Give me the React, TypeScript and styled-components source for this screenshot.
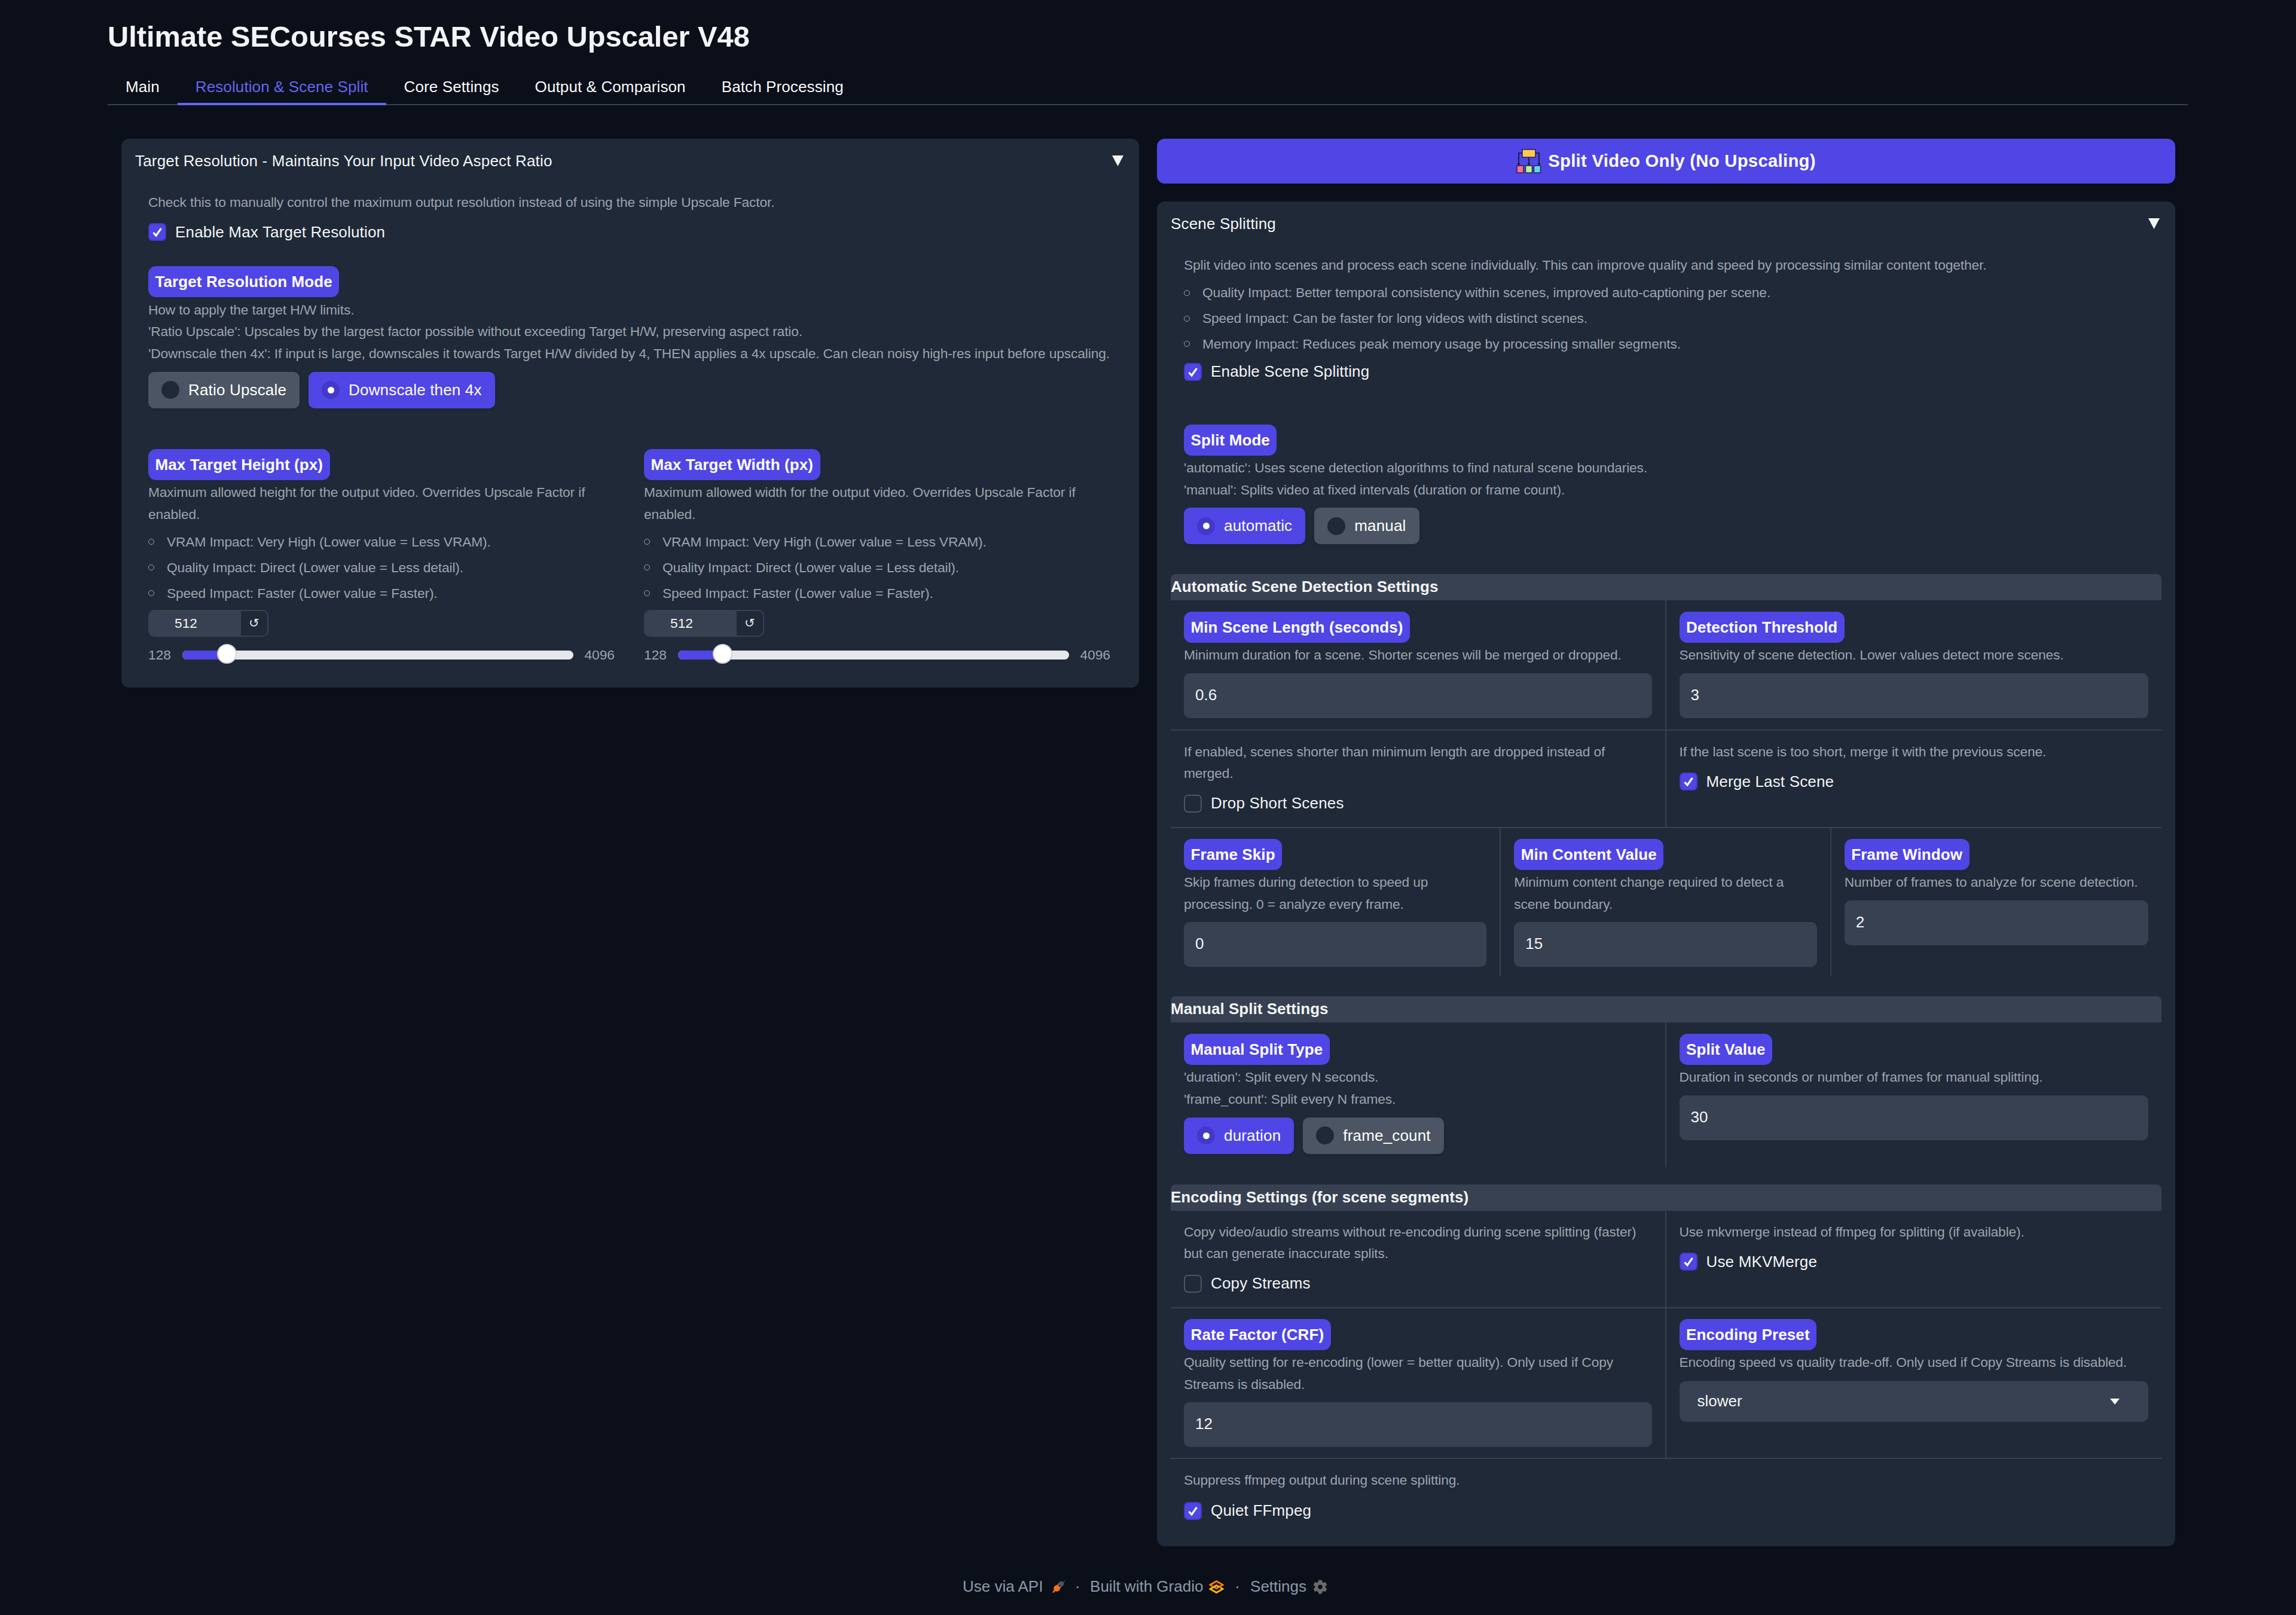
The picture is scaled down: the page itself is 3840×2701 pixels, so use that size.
import React from 'react';
import styled, { createGlobalStyle } from 'styled-components';
import { FaCog } from 'react-icons/fa';

const Global = createGlobalStyle`
  * { box-sizing: border-box; }
  html, body { margin: 0; padding: 0; background: #0b0f19; }
  body { font-family: "Liberation Sans", Arial, sans-serif; color: #f3f4f6; letter-spacing: 0.17px; }
`;

const Page = styled.div`
  min-height: 2701px;
  padding: 0 181px 0 180px;
  background: #0b0f19;
`;
const Title = styled.h1`
  margin: 0;
  height: 115px;
  padding-top: 27px;
  font-size: 48.75px;
  line-height: 68px;
  font-weight: 700;
  letter-spacing: 0;
  color: #f3f4f6;
`;
const TabBar = styled.nav`
  display: flex;
  height: 61px;
  box-shadow: inset 0 -2px 0 #374151;
`;
const Tab = styled.div<{ $active?: boolean }>`
  padding: 0 30px;
  height: 61px;
  line-height: 60px;
  font-size: 26px;
  letter-spacing: 0.11px;
  color: ${p => (p.$active ? '#6366f1' : '#f9fafb')};
  border-bottom: 4px solid ${p => (p.$active ? '#6366f1' : 'transparent')};
`;
const Columns = styled.main`
  display: grid;
  grid-template-columns: 1702px 1703px;
  column-gap: 30px;
  padding: 56px 0 0 23px;
  align-items: start;
`;
const Stack = styled.div`
  display: flex;
  flex-direction: column;
  gap: 30px;
`;
const Panel = styled.section`
  background: #1f2937;
  border-radius: 13px;
  padding: 0 23px;
`;
const LeftPanel = styled(Panel)`
  padding-bottom: 38px;
`;
const RightPanel = styled(Panel)`
  padding-bottom: 44px;
`;
const PanelHeader = styled.header`
  display: flex;
  align-items: center;
  justify-content: space-between;
  height: 74px;
  margin-bottom: -2px;
  font-size: 26px;
  color: #f3f4f6;
`;
const Caret = styled.svg`
  width: 19px;
  height: 18px;
  margin-right: 3px;
  fill: #f3f4f6;
`;
const Body = styled.div`
  padding: 16px 0 0 22px;
`;
const RightBody = styled.div`
  padding-top: 16px;
`;
const Intro = styled.div`
  padding-left: 22px;
`;
const Closing = styled(Intro)`
  padding-top: 17px;
`;
const Pill = styled.div<{ $mt?: number }>`
  display: inline-block;
  height: 52px;
  line-height: 52px;
  padding: 0 11.5px;
  margin-top: ${p => p.$mt ?? 0}px;
  background: #4f46e5;
  border-radius: 13px;
  color: #fff;
  font-size: 26px;
  font-weight: 700;
  letter-spacing: 0.1px;
  white-space: nowrap;
  vertical-align: top;
`;
const Desc = styled.div`
  margin-top: 2.5px;
  font-size: 22.75px;
  line-height: 36.4px;
  letter-spacing: -0.13px;
  color: #9ca3af;
`;
const PlainDesc = styled(Desc)`
  margin-top: 0;
`;
const Bullets = styled.ul`
  list-style: none;
  margin: 10px 0 0;
  padding: 0;
  display: flex;
  flex-direction: column;
  gap: 6.5px;
  font-size: 22.75px;
  line-height: 36.4px;
  letter-spacing: -0.13px;
  color: #9ca3af;
`;
const Bullet = styled.li`
  display: flex;
  align-items: center;
  gap: 21px;
  &::before {
    content: '';
    width: 8px;
    height: 8px;
    border: 1.5px solid #9ca3af;
    border-radius: 50%;
  }
`;
const CheckRow = styled.label<{ $mt?: number }>`
  display: flex;
  align-items: center;
  gap: 15px;
  height: 30px;
  margin-top: ${p => p.$mt ?? 17}px;
  font-size: 26px;
  color: #f3f4f6;
`;
const CheckBox = styled.span<{ $on: boolean }>`
  display: flex;
  align-items: center;
  justify-content: center;
  width: 30px;
  height: 30px;
  border-radius: 7px;
  background: ${p => (p.$on ? '#4f46e5' : 'transparent')};
  border: 2px solid ${p => (p.$on ? '#4338ca' : '#4b5563')};
`;
const CheckMark = styled.svg`
  width: 20px;
  height: 20px;
  fill: none;
  stroke: #fff;
  stroke-width: 3.2;
`;
const Check = ({ label, on, mt }: { label: string; on?: boolean; mt?: number }) => (
  <CheckRow $mt={mt}>
    <CheckBox $on={!!on}>
      {on && (
        <CheckMark viewBox="0 0 20 20">
          <path d="M3.5 11 L8 16 L16.5 4" />
        </CheckMark>
      )}
    </CheckBox>
    {label}
  </CheckRow>
);
const Radios = styled.div`
  display: flex;
  gap: 15px;
  margin-top: 12.5px;
`;
const RadioItem = styled.div<{ $on: boolean }>`
  display: flex;
  align-items: center;
  gap: 15px;
  height: 61px;
  padding: 0 22px;
  font-size: 26px;
  color: #fff;
  border-radius: 10px;
  background: ${p => (p.$on ? '#4f46e5' : '#4b5563')};
  box-shadow: 0 2px 4px rgba(0, 0, 0, 0.1);
`;
const RadioDot = styled.span<{ $on: boolean }>`
  display: flex;
  align-items: center;
  justify-content: center;
  width: 30px;
  height: 30px;
  border-radius: 50%;
  background: ${p => (p.$on ? '#4338ca' : '#1f2937')};
  &::after {
    content: '';
    width: 11px;
    height: 11px;
    border-radius: 50%;
    background: ${p => (p.$on ? '#fff' : 'transparent')};
  }
`;
const RadioSet = ({ items, active }: { items: string[]; active: string }) => (
  <Radios>
    {items.map(i => (
      <RadioItem key={i} $on={i === active}>
        <RadioDot $on={i === active} />
        {i}
      </RadioItem>
    ))}
  </Radios>
);
const TwoSliders = styled.div`
  display: grid;
  grid-template-columns: 780px 780px;
  column-gap: 49px;
  margin-top: 68px;
`;
const NumberBox = styled.div`
  display: flex;
  width: 201px;
  height: 45px;
  margin-top: 10px;
  border-radius: 10px;
  border: 2px solid #374151;
  overflow: hidden;
`;
const NumberValue = styled.div`
  width: 153px;
  padding-left: 42px;
  background: #374151;
  font-size: 22.75px;
  line-height: 40px;
  letter-spacing: 0;
  color: #f3f4f6;
`;
const ResetButton = styled.div`
  flex: 1;
  text-align: center;
  font-family: "DejaVu Sans", sans-serif;
  font-size: 21px;
  line-height: 40px;
  color: #e5e7eb;
`;
const SliderRow = styled.div`
  display: flex;
  align-items: center;
  height: 33px;
  margin-top: 14px;
  font-size: 22.75px;
  letter-spacing: 0;
  color: #9ca3af;
`;
const Track = styled.div`
  position: relative;
  width: 655px;
  height: 15px;
  margin: 0 18px 0 19px;
  border-radius: 8px;
  background: #e5e7eb;
`;
const TrackFill = styled.div`
  height: 100%;
  border-radius: 8px 0 0 8px;
  background: #4f46e5;
`;
const Thumb = styled.div`
  position: absolute;
  top: -11px;
  width: 33px;
  height: 33px;
  margin-left: -16.5px;
  border-radius: 50%;
  background: #fff;
  border: 2px solid #d1d5db;
`;
const Split = styled.button`
  display: flex;
  align-items: center;
  justify-content: center;
  gap: 11px;
  width: 100%;
  height: 75px;
  border: 0;
  border-radius: 13px;
  background: #4f46e5;
  color: #fff;
  font-family: inherit;
  font-size: 29.25px;
  font-weight: 700;
  letter-spacing: 0.3px;
`;
const SectionTitle = styled.h3<{ $mt: number }>`
  margin: ${p => p.$mt}px 0 0;
  height: 44px;
  line-height: 42px;
  font-size: 26px;
  font-weight: 700;
  letter-spacing: 0.03px;
  color: #f3f4f6;
  background: #374151;
  border-radius: 8px 8px 0 0;
`;
const Row = styled.div<{ $cols: number; $line?: boolean }>`
  display: grid;
  grid-template-columns: repeat(${p => p.$cols}, 1fr);
  border-bottom: 2px solid ${p => (p.$line ? '#374151' : 'transparent')};
`;
const Cell = styled.div<{ $pt?: number; $pb?: number }>`
  min-width: 0;
  padding: ${p => p.$pt ?? 19}px 22px ${p => p.$pb ?? 19}px 22px;
  border-right: 2px solid #374151;
  &:last-child {
    border-right: 0;
  }
`;
const Input = styled.div`
  height: 75px;
  margin-top: 12px;
  padding-left: 19px;
  background: #374151;
  border-radius: 10px;
  font-size: 26px;
  line-height: 73px;
  letter-spacing: 0;
  color: #f3f4f6;
`;
const Select = styled.div`
  display: flex;
  align-items: center;
  justify-content: space-between;
  height: 68px;
  margin-top: 13px;
  padding: 0 48px 0 30px;
  background: #374151;
  border-radius: 10px;
  font-size: 26px;
  letter-spacing: 0;
  color: #f3f4f6;
`;
const SelectCaret = styled.svg`
  width: 16px;
  height: 10px;
  fill: #f3f4f6;
`;
const Footer = styled.footer`
  display: flex;
  align-items: center;
  justify-content: center;
  height: 56px;
  margin-top: 40px;
  padding-right: 9px;
  font-size: 26px;
  letter-spacing: 0;
  color: #8e99ab;
`;
const FooterDot = styled.span<{ $m: number }>`
  margin: 0 ${p => p.$m}px;
`;
const FooterIcon = styled.svg<{ $w: number; $h: number; $ml: number }>`
  width: ${p => p.$w}px;
  height: ${p => p.$h}px;
  margin-left: ${p => p.$ml}px;
`;
const GearIcon = styled(FaCog)`
  width: 24px;
  height: 24px;
  margin-left: 11px;
  color: #6b6b6b;
`;

const Limits = ({ label, dim }: { label: string; dim: string }) => {
  const pos = `${(75 / 655) * 100}%`;
  return (
    <div>
      <Pill>{label}</Pill>
      <Desc>{`Maximum allowed ${dim} for the output video. Overrides Upscale Factor if enabled.`}</Desc>
      <Bullets>
        <Bullet>VRAM Impact: Very High (Lower value = Less VRAM).</Bullet>
        <Bullet>Quality Impact: Direct (Lower value = Less detail).</Bullet>
        <Bullet>Speed Impact: Faster (Lower value = Faster).</Bullet>
      </Bullets>
      <NumberBox>
        <NumberValue>512</NumberValue>
        <ResetButton>↺</ResetButton>
      </NumberBox>
      <SliderRow>
        128
        <Track>
          <TrackFill style={{ width: pos }} />
          <Thumb style={{ left: pos }} />
        </Track>
        4096
      </SliderRow>
    </div>
  );
};

const Arrow = () => (
  <Caret viewBox="0 0 19 18">
    <polygon points="0,0 19,0 9.5,18" />
  </Caret>
);

export default function App() {
  return (
    <Page>
      <Global />
      <Title>Ultimate SECourses STAR Video Upscaler V48</Title>
      <TabBar>
        <Tab>Main</Tab>
        <Tab $active>Resolution &amp; Scene Split</Tab>
        <Tab>Core Settings</Tab>
        <Tab>Output &amp; Comparison</Tab>
        <Tab>Batch Processing</Tab>
      </TabBar>
      <Columns>
        <LeftPanel>
          <PanelHeader>
            Target Resolution - Maintains Your Input Video Aspect Ratio
            <Arrow />
          </PanelHeader>
          <Body>
            <PlainDesc>Check this to manually control the maximum output resolution instead of using the simple Upscale Factor.</PlainDesc>
            <Check label="Enable Max Target Resolution" on />
            <Pill $mt={42}>Target Resolution Mode</Pill>
            <Desc>
              How to apply the target H/W limits.
              <br />
              'Ratio Upscale': Upscales by the largest factor possible without exceeding Target H/W, preserving aspect ratio.
              <br />
              'Downscale then 4x': If input is large, downscales it towards Target H/W divided by 4, THEN applies a 4x upscale. Can clean noisy high-res input before upscaling.
            </Desc>
            <RadioSet items={['Ratio Upscale', 'Downscale then 4x']} active="Downscale then 4x" />
            <TwoSliders>
              <Limits label="Max Target Height (px)" dim="height" />
              <Limits label="Max Target Width (px)" dim="width" />
            </TwoSliders>
          </Body>
        </LeftPanel>
        <Stack>
          <Split>
            <svg width="42" height="41" viewBox="0 0 42 41">
              <g fill="none" stroke="#15122e" strokeWidth="1.6">
                <path d="M10 7 H4 V26 M21 14 V26 M32 7 H38 V26" />
              </g>
              <g fill="#15122e">
                <polygon points="1.5,24 6.5,24 4,28" />
                <polygon points="18.5,24 23.5,24 21,28" />
                <polygon points="35.5,24 40.5,24 38,28" />
              </g>
              <g stroke="#2a2560" strokeWidth="1.6">
                <rect x="10" y="1" width="22" height="13" fill="#fecb4d" />
                <rect x="1" y="28" width="11" height="12" fill="#fb7185" />
                <rect x="15.5" y="28" width="11" height="12" fill="#bef08a" />
                <rect x="29.5" y="28" width="11" height="12" fill="#5fd4ee" />
              </g>
            </svg>
            Split Video Only (No Upscaling)
          </Split>
          <RightPanel>
            <PanelHeader>
              Scene Splitting
              <Arrow />
            </PanelHeader>
            <RightBody>
              <Intro>
                <PlainDesc>Split video into scenes and process each scene individually. This can improve quality and speed by processing similar content together.</PlainDesc>
                <Bullets>
                  <Bullet>Quality Impact: Better temporal consistency within scenes, improved auto-captioning per scene.</Bullet>
                  <Bullet>Speed Impact: Can be faster for long videos with distinct scenes.</Bullet>
                  <Bullet>Memory Impact: Reduces peak memory usage by processing smaller segments.</Bullet>
                </Bullets>
                <Check label="Enable Scene Splitting" on mt={13} />
                <Pill $mt={73}>Split Mode</Pill>
                <Desc>
                  'automatic': Uses scene detection algorithms to find natural scene boundaries.
                  <br />
                  'manual': Splits video at fixed intervals (duration or frame count).
                </Desc>
                <RadioSet items={['automatic', 'manual']} active="automatic" />
              </Intro>

              <SectionTitle $mt={49.5}>Automatic Scene Detection Settings</SectionTitle>
              <Row $cols={2} $line>
                <Cell>
                  <Pill>Min Scene Length (seconds)</Pill>
                  <Desc>Minimum duration for a scene. Shorter scenes will be merged or dropped.</Desc>
                  <Input>0.6</Input>
                </Cell>
                <Cell>
                  <Pill>Detection Threshold</Pill>
                  <Desc>Sensitivity of scene detection. Lower values detect more scenes.</Desc>
                  <Input>3</Input>
                </Cell>
              </Row>
              <Row $cols={2} $line>
                <Cell $pt={17} $pb={24}>
                  <PlainDesc>If enabled, scenes shorter than minimum length are dropped instead of merged.</PlainDesc>
                  <Check label="Drop Short Scenes" />
                </Cell>
                <Cell $pt={17} $pb={24}>
                  <PlainDesc>If the last scene is too short, merge it with the previous scene.</PlainDesc>
                  <Check label="Merge Last Scene" on />
                </Cell>
              </Row>
              <Row $cols={3}>
                <Cell $pt={18} $pb={16}>
                  <Pill>Frame Skip</Pill>
                  <Desc>Skip frames during detection to speed up processing. 0 = analyze every frame.</Desc>
                  <Input>0</Input>
                </Cell>
                <Cell $pt={18} $pb={16}>
                  <Pill>Min Content Value</Pill>
                  <Desc>Minimum content change required to detect a scene boundary.</Desc>
                  <Input>15</Input>
                </Cell>
                <Cell $pt={18} $pb={16}>
                  <Pill>Frame Window</Pill>
                  <Desc>Number of frames to analyze for scene detection.</Desc>
                  <Input>2</Input>
                </Cell>
              </Row>

              <SectionTitle $mt={31}>Manual Split Settings</SectionTitle>
              <Row $cols={2}>
                <Cell $pb={22}>
                  <Pill>Manual Split Type</Pill>
                  <Desc>
                    'duration': Split every N seconds.
                    <br />
                    'frame_count': Split every N frames.
                  </Desc>
                  <RadioSet items={['duration', 'frame_count']} active="duration" />
                </Cell>
                <Cell $pb={22}>
                  <Pill>Split Value</Pill>
                  <Desc>Duration in seconds or number of frames for manual splitting.</Desc>
                  <Input>30</Input>
                </Cell>
              </Row>

              <SectionTitle $mt={27}>Encoding Settings (for scene segments)</SectionTitle>
              <Row $cols={2} $line>
                <Cell $pt={17} $pb={24}>
                  <PlainDesc>Copy video/audio streams without re-encoding during scene splitting (faster) but can generate inaccurate splits.</PlainDesc>
                  <Check label="Copy Streams" />
                </Cell>
                <Cell $pt={17} $pb={24}>
                  <PlainDesc>Use mkvmerge instead of ffmpeg for splitting (if available).</PlainDesc>
                  <Check label="Use MKVMerge" on />
                </Cell>
              </Row>
              <Row $cols={2} $line>
                <Cell $pt={18} $pb={18}>
                  <Pill>Rate Factor (CRF)</Pill>
                  <Desc>Quality setting for re-encoding (lower = better quality). Only used if Copy Streams is disabled.</Desc>
                  <Input>12</Input>
                </Cell>
                <Cell $pt={18} $pb={18}>
                  <Pill>Encoding Preset</Pill>
                  <Desc>Encoding speed vs quality trade-off. Only used if Copy Streams is disabled.</Desc>
                  <Select>
                    slower
                    <SelectCaret viewBox="0 0 16 10">
                      <polygon points="0,0 16,0 8,10" />
                    </SelectCaret>
                  </Select>
                </Cell>
              </Row>
              <Closing>
                <PlainDesc>Suppress ffmpeg output during scene splitting.</PlainDesc>
                <Check label="Quiet FFmpeg" on mt={18.5} />
              </Closing>
            </RightBody>
          </RightPanel>
        </Stack>
      </Columns>
      <Footer>
        Use via API
        <FooterIcon $w={21} $h={21} $ml={16} viewBox="0 0 21 21">
          <path d="M9 5 L13 2 C15 1 17 2 18 3 L21 0 L21 1 L19 5 C19.5 7 19 8 17 10 L14 11 Z" fill="#4b5563" />
          <path d="M3 11 C5 8 7 8 8 8 L9.5 6 L11 7 L10 9 L12 11 L14 10 L14.5 12 L13 13 C13 15 12 16.5 10 18 C8 19 6 19 5 18 L2 21 L0 20 L3 16 C2 14 2 13 3 11 Z" fill="#f97316" />
        </FooterIcon>
        <FooterDot $m={16.5}>·</FooterDot>
        Built with Gradio
        <FooterIcon $w={25} $h={22} $ml={10} viewBox="0 0 25 22">
          <g fill="none" strokeWidth="3">
            <path d="M6 10 L2 7.5 L12.5 1.5 L23 7.5 L12.5 13.5 L8 11" stroke="#ff7c00" />
            <path d="M19 12 L23 14.5 L12.5 20.5 L2 14.5 L12.5 8.5 L17 11" stroke="#fdb40c" />
          </g>
        </FooterIcon>
        <FooterDot $m={17.5}>·</FooterDot>
        Settings
        <GearIcon />
      </Footer>
    </Page>
  );
}
